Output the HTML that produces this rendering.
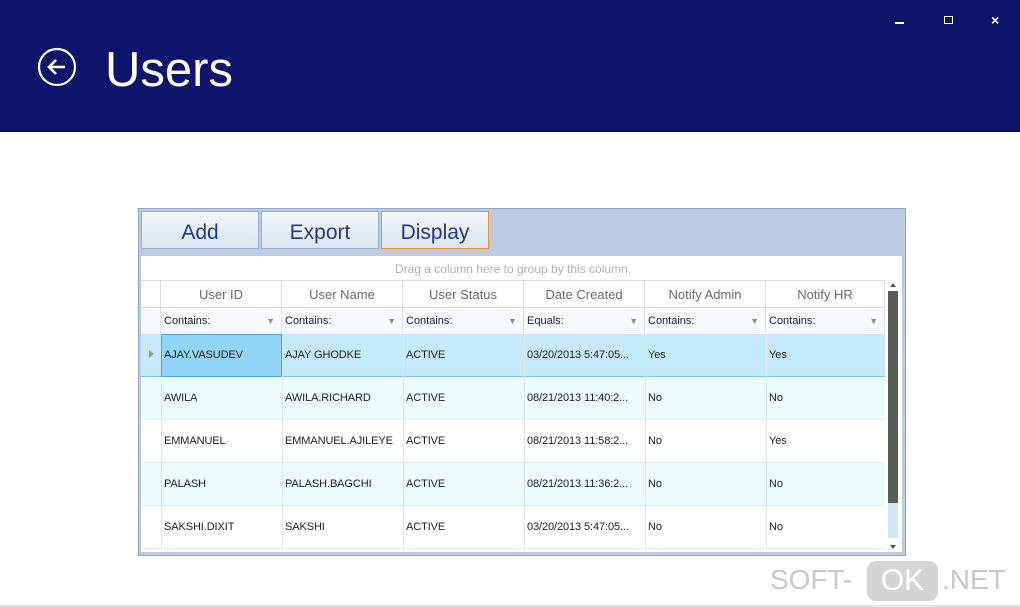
<!DOCTYPE html>
<html><head><meta charset="utf-8"><style>
*{margin:0;padding:0;box-sizing:border-box}
body{width:1020px;height:607px;background:#fff;position:relative;overflow:hidden;font-family:"Liberation Sans",sans-serif}
.a{position:absolute}
#hdr{left:0;top:0;width:1020px;height:132px;background:#0e146a}
.title{left:105px;top:42px;font-size:49px;color:#fff;font-weight:normal;letter-spacing:0}
.btn{top:211px;height:38px;background:linear-gradient(#f4f7fc,#dbe4f1);border:1px solid #98aed0;font-size:21px;color:#1f3a8a;text-align:center;line-height:42px}
.cell{position:absolute;font-size:11px;color:#222;white-space:nowrap;overflow:hidden;letter-spacing:-0.1px}
.hc{position:absolute;top:280px;height:28px;border-right:1px solid #dcdcdc;border-bottom:1px solid #dcdcdc;border-top:1px solid #dcdcdc;font-size:13px;color:#6a6a6a;text-align:center;line-height:28px;background:#fff}
.fc{position:absolute;top:308px;height:26px;border-right:1px solid #e3e3e3;font-size:11px;color:#222;line-height:26px;padding-left:3px;background:#f6f9fd}
.fc i{position:absolute;right:6px;top:0;font-style:normal;color:#8a9a6a;font-size:9px}
.row{position:absolute;left:141px;width:744px;height:43px;border-bottom:1px solid #e3eef0}
.vl{position:absolute;top:280px;height:270px;width:1px;background:#e2e6e8}
</style></head><body>
<div id="hdr" class="a"></div>
<svg class="a" style="left:37px;top:47px" width="40" height="40"><circle cx="20" cy="20" r="18" fill="none" stroke="#fff" stroke-width="2.2"/><path d="M12 20h16M19 13l-7 7 7 7" fill="none" stroke="#fff" stroke-width="2.6"/></svg>
<div class="a title">Users</div>
<div class="a" style="left:895px;top:22px;width:9px;height:2px;background:#fff"></div>
<div class="a" style="left:944px;top:16px;width:9px;height:8px;border:1.5px solid #fff"></div>
<div class="a" style="left:991px;top:12px;color:#fff;font-size:14px;font-weight:bold">×</div>

<div class="a" style="left:138px;top:208px;width:768px;height:348px;background:#bccbe3;border:1px solid #8da6cc"></div>
<div class="a btn" style="left:141px;width:118px">Add</div>
<div class="a btn" style="left:261px;width:118px">Export</div>
<div class="a btn" style="left:381px;width:108px;border:1.5px solid #f0902a">Display</div>
<div class="a" style="left:141px;top:256px;width:761px;height:296px;background:#fff"></div>
<div class="a" style="left:141px;top:258px;width:744px;height:22px;text-align:center;font-size:12px;color:#b0b0b0;line-height:22px">Drag a column here to group by this column.</div>
<div class="hc" style="left:141px;width:20px"></div>
<div class="hc" style="left:161px;width:121px">User ID</div>
<div class="hc" style="left:282px;width:121px">User Name</div>
<div class="hc" style="left:403px;width:121px">User Status</div>
<div class="hc" style="left:524px;width:121px">Date Created</div>
<div class="hc" style="left:645px;width:121px">Notify Admin</div>
<div class="hc" style="left:766px;width:119px">Notify HR</div>
<div class="fc" style="left:141px;width:20px"></div>
<div class="fc" style="left:161px;width:121px">Contains:<i>▼</i></div>
<div class="fc" style="left:282px;width:121px">Contains:<i>▼</i></div>
<div class="fc" style="left:403px;width:121px">Contains:<i>▼</i></div>
<div class="fc" style="left:524px;width:121px">Equals:<i>▼</i></div>
<div class="fc" style="left:645px;width:121px">Contains:<i>▼</i></div>
<div class="fc" style="left:766px;width:119px">Contains:<i>▼</i></div>

<div class="row" style="top:334px;background:#c3e9fb;border-bottom:1px solid #7cc4ea"></div>
<div class="row" style="top:377px;background:#ecfcfc"></div>
<div class="row" style="top:420px;background:#fff"></div>
<div class="row" style="top:463px;background:#ecfcfc"></div>
<div class="row" style="top:506px;background:#fff"></div>
<div class="vl" style="left:161px;top:334px;height:216px"></div>
<div class="vl" style="left:282px;top:334px;height:216px"></div>
<div class="vl" style="left:403px;top:334px;height:216px"></div>
<div class="vl" style="left:524px;top:334px;height:216px"></div>
<div class="vl" style="left:645px;top:334px;height:216px"></div>
<div class="vl" style="left:766px;top:334px;height:216px"></div>
<div class="a" style="left:161px;top:334px;width:121px;height:43px;background:#90d4f6;border:1px solid #4fa6da"></div>
<div class="a" style="left:149px;top:350px;width:0;height:0;border-left:5px solid #9a9a7a;border-top:4px solid transparent;border-bottom:4px solid transparent"></div>

<div class="cell" style="left:164px;top:349px">AJAY.VASUDEV</div><div class="cell" style="left:285px;top:349px">AJAY GHODKE</div><div class="cell" style="left:406px;top:349px">ACTIVE</div><div class="cell" style="left:527px;top:349px">03/20/2013 5:47:05...</div><div class="cell" style="left:648px;top:349px">Yes</div><div class="cell" style="left:769px;top:349px">Yes</div>
<div class="cell" style="left:164px;top:392px">AWILA</div><div class="cell" style="left:285px;top:392px">AWILA.RICHARD</div><div class="cell" style="left:406px;top:392px">ACTIVE</div><div class="cell" style="left:527px;top:392px">08/21/2013 11:40:2...</div><div class="cell" style="left:648px;top:392px">No</div><div class="cell" style="left:769px;top:392px">No</div>
<div class="cell" style="left:164px;top:435px">EMMANUEL</div><div class="cell" style="left:285px;top:435px">EMMANUEL.AJILEYE</div><div class="cell" style="left:406px;top:435px">ACTIVE</div><div class="cell" style="left:527px;top:435px">08/21/2013 11:58:2...</div><div class="cell" style="left:648px;top:435px">No</div><div class="cell" style="left:769px;top:435px">Yes</div>
<div class="cell" style="left:164px;top:478px">PALASH</div><div class="cell" style="left:285px;top:478px">PALASH.BAGCHI</div><div class="cell" style="left:406px;top:478px">ACTIVE</div><div class="cell" style="left:527px;top:478px">08/21/2013 11:36:2...</div><div class="cell" style="left:648px;top:478px">No</div><div class="cell" style="left:769px;top:478px">No</div>
<div class="cell" style="left:164px;top:521px">SAKSHI.DIXIT</div><div class="cell" style="left:285px;top:521px">SAKSHI</div><div class="cell" style="left:406px;top:521px">ACTIVE</div><div class="cell" style="left:527px;top:521px">03/20/2013 5:47:05...</div><div class="cell" style="left:648px;top:521px">No</div><div class="cell" style="left:769px;top:521px">No</div>

<div class="a" style="left:885px;top:280px;width:17px;height:272px;background:#fff"></div>
<div class="a" style="left:890px;top:283px;width:0;height:0;border-bottom:4px solid #555;border-left:3px solid transparent;border-right:3px solid transparent"></div>
<div class="a" style="left:888px;top:291px;width:10px;height:212px;background:#595d57"></div>
<div class="a" style="left:888px;top:503px;width:10px;height:35px;background:#cfe6f6"></div>
<div class="a" style="left:890px;top:545px;width:0;height:0;border-top:4px solid #555;border-left:3px solid transparent;border-right:3px solid transparent"></div>

<div class="a" style="left:770px;top:564px;font-size:28px;color:#c8c8c8">SOFT-</div>
<div class="a" style="left:867px;top:561px;width:71px;height:40px;border-radius:9px;background:#d4d4d4;color:#fff;font-size:30px;text-align:center;line-height:40px">OK</div>
<div class="a" style="left:942px;top:564px;font-size:28px;color:#c8c8c8">.NET</div>
<div class="a" style="left:0;top:605px;width:1020px;height:2px;background:#e4e4e4"></div>
</body></html>
